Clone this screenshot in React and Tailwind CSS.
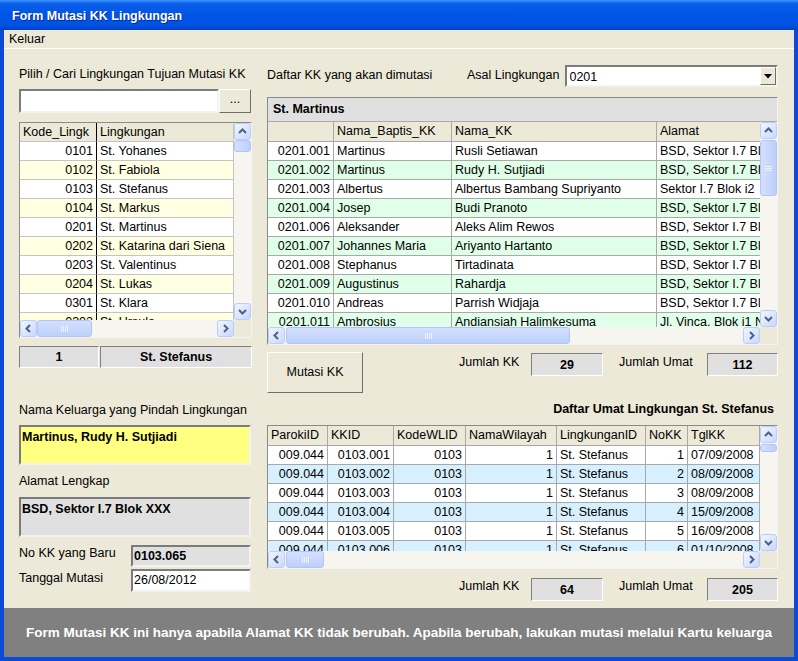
import React from "react";

const leftRows = [
  ["0101", "St. Yohanes"],
  ["0102", "St. Fabiola"],
  ["0103", "St. Stefanus"],
  ["0104", "St. Markus"],
  ["0201", "St. Martinus"],
  ["0202", "St. Katarina dari Siena"],
  ["0203", "St. Valentinus"],
  ["0204", "St. Lukas"],
  ["0301", "St. Klara"],
  ["0302", "St. Ursula"],
];

const kkRows = [
  ["0201.001", "Martinus", "Rusli Setiawan", "BSD, Sektor I.7 Blok XXX"],
  ["0201.002", "Martinus", "Rudy H. Sutjiadi", "BSD, Sektor I.7 Blok XXX"],
  ["0201.003", "Albertus", "Albertus Bambang Supriyanto", "Sektor I.7 Blok i2"],
  ["0201.004", "Josep", "Budi Pranoto", "BSD, Sektor I.7 Blok XXX"],
  ["0201.006", "Aleksander", "Aleks Alim Rewos", "BSD, Sektor I.7 Blok XXX"],
  ["0201.007", "Johannes Maria", "Ariyanto Hartanto", "BSD, Sektor I.7 Blok XXX"],
  ["0201.008", "Stephanus", "Tirtadinata", "BSD, Sektor I.7 Blok XXX"],
  ["0201.009", "Augustinus", "Rahardja", "BSD, Sektor I.7 Blok XXX"],
  ["0201.010", "Andreas", "Parrish Widjaja", "BSD, Sektor I.7 Blok XXX"],
  ["0201.011", "Ambrosius", "Andiansiah Halimkesuma", "Jl. Vinca. Blok i1 No"],
];

const umatRows = [
  ["009.044", "0103.001", "0103", "1", "St. Stefanus", "1", "07/09/2008"],
  ["009.044", "0103.002", "0103", "1", "St. Stefanus", "2", "08/09/2008"],
  ["009.044", "0103.003", "0103", "1", "St. Stefanus", "3", "08/09/2008"],
  ["009.044", "0103.004", "0103", "1", "St. Stefanus", "4", "15/09/2008"],
  ["009.044", "0103.005", "0103", "1", "St. Stefanus", "5", "16/09/2008"],
  ["009.044", "0103.006", "0103", "1", "St. Stefanus", "6", "01/10/2008"],
];

const leftCols = [
  { title: "Kode_Lingk", w: "w-[77px]", align: "text-right", sep: "border-r-black" },
  { title: "Lingkungan", w: "w-[137px]", align: "text-left", sep: "border-r-[#c4c4c4]" },
];

const kkCols = [
  { title: "", w: "w-[66px]", align: "text-right", sep: "border-r-[#a9a9a9]" },
  { title: "Nama_Baptis_KK", w: "w-[118px]", align: "text-left", sep: "border-r-[#a9a9a9]" },
  { title: "Nama_KK", w: "w-[205px]", align: "text-left", sep: "border-r-[#a9a9a9]" },
  { title: "Alamat", w: "w-[160px]", align: "text-left", sep: "border-r-[#a9a9a9]" },
];

const umatCols = [
  { title: "ParokiID", w: "w-[60px]", align: "text-right", sep: "border-r-[#a9a9a9]" },
  { title: "KKID", w: "w-[66px]", align: "text-right", sep: "border-r-[#a9a9a9]" },
  { title: "KodeWLID", w: "w-[72px]", align: "text-right", sep: "border-r-[#a9a9a9]" },
  { title: "NamaWilayah", w: "w-[91px]", align: "text-right", sep: "border-r-[#a9a9a9]" },
  { title: "LingkunganID", w: "w-[89px]", align: "text-left", sep: "border-r-[#a9a9a9]" },
  { title: "NoKK", w: "w-[42px]", align: "text-right", sep: "border-r-[#a9a9a9]" },
  { title: "TglKK", w: "w-[72px]", align: "text-left", sep: "border-r-[#a9a9a9]" },
];

const Arrow = ({ dir }) => {
  const pts = {
    up: "4,9 7.5,5.5 11,9",
    down: "4,6 7.5,9.5 11,6",
    left: "9,4 5.5,7.5 9,11",
    right: "6,4 9.5,7.5 6,11",
  }[dir];
  return (
    <svg width="15" height="15" viewBox="0 0 15 15">
      <polyline points={pts} fill="none" stroke="#4d6185" strokeWidth="2" />
    </svg>
  );
};

const ScrollBtn = ({ dir }) => (
  <div className="flex h-[17px] w-[17px] shrink-0 items-center justify-center rounded-[3px] border border-[#bccdf9] bg-[linear-gradient(135deg,#f2f6ff_0%,#c8d7fc_100%)]">
    <Arrow dir={dir} />
  </div>
);

const VScroll = ({ gap, size, grip }) => (
  <div className="flex w-[17px] shrink-0 flex-col bg-[#f6f5f0]">
    <ScrollBtn dir="up" />
    <div className="flex min-h-0 flex-1 flex-col">
      <div className={gap} />
      <div className={"flex shrink-0 flex-col items-center justify-center gap-[1px] rounded-[3px] border border-[#b2c5f6] bg-[linear-gradient(90deg,#d4e0fe,#bdcffa)] " + size}>
        {grip && (
          <>
            <div className="h-px w-[7px] bg-[#eef3ff]" />
            <div className="h-px w-[7px] bg-[#eef3ff]" />
            <div className="h-px w-[7px] bg-[#eef3ff]" />
          </>
        )}
      </div>
    </div>
    <ScrollBtn dir="down" />
  </div>
);

const HScroll = ({ gap, size }) => (
  <div className="flex h-[17px] min-w-0 flex-1 bg-[#f6f5f0]">
    <ScrollBtn dir="left" />
    <div className="flex min-w-0 flex-1">
      <div className={gap} />
      <div className={"flex shrink-0 items-center justify-center gap-[1px] rounded-[3px] border border-[#b2c5f6] bg-[linear-gradient(180deg,#d4e0fe,#bdcffa)] " + size}>
        <div className="h-[6px] w-px bg-[#eef3ff]" />
        <div className="h-[6px] w-px bg-[#eef3ff]" />
        <div className="h-[6px] w-px bg-[#eef3ff]" />
        <div className="h-[6px] w-px bg-[#eef3ff]" />
      </div>
    </div>
    <ScrollBtn dir="right" />
  </div>
);

function Grid({ caption, cols, rows, bgs, line, header, v, h, className }) {
  return (
    <div className={"flex flex-col border border-t-[#8a8a8a] border-l-[#8a8a8a] border-b-[#f4f4f4] border-r-[#f4f4f4] bg-white " + className}>
      {caption}
      <div className="flex min-h-0 flex-1">
        <div className="flex min-w-0 flex-1 flex-col overflow-hidden">
          <div className="flex shrink-0">
            {cols.map((c, i) => (
              <div key={i} className={`${c.w} ${header} ${c.sep} shrink-0 overflow-hidden whitespace-nowrap border-r border-b bg-[#ece9d8] px-[3px]`}>
                {c.title}
              </div>
            ))}
          </div>
          <div className="min-h-0 flex-1 overflow-hidden">
            {rows.map((r, ri) => (
              <div key={ri} className={`flex h-[19px] ${bgs[ri % 2]}`}>
                {r.map((val, ci) => (
                  <div key={ci} className={`${cols[ci].w} ${cols[ci].align} ${cols[ci].sep} ${line} shrink-0 overflow-hidden whitespace-nowrap border-r border-b px-[3px] leading-[18px]`}>
                    {val}
                  </div>
                ))}
              </div>
            ))}
          </div>
        </div>
        <VScroll {...v} />
      </div>
      <div className="flex shrink-0">
        <HScroll {...h} />
        <div className="w-[17px] shrink-0 bg-[#ece9d8]" />
      </div>
    </div>
  );
}

const sunken = "border border-t-[#808080] border-l-[#808080] border-b-white border-r-white";
const sunken2 = "border-2 border-t-[#7b7b7b] border-l-[#7b7b7b] border-b-[#f2f2f2] border-r-[#f2f2f2]";
const raised = "border border-t-white border-l-white border-b-[#716f64] border-r-[#716f64]";

const CountBox = ({ value, className }) => (
  <div className={`${sunken} h-[23px] bg-[#e0e0e0] text-center font-bold leading-[22px] ${className}`}>{value}</div>
);

export default function App() {
  return (
    <div className="flex h-[661px] w-[798px] flex-col bg-[#ece9d8] font-['Liberation_Sans',Arial,sans-serif] text-[12.5px] text-black">
      {/* title bar */}
      <div className="flex h-[30px] shrink-0 items-center bg-[linear-gradient(180deg,#3d95ff_0%,#0a5ee9_12%,#0055e5_50%,#0152e3_85%,#003fc0_100%)] pl-[12px] pt-[2px] text-[12.5px] font-bold text-white [text-shadow:1px_1px_0_#0a2a90]">
        Form Mutasi KK Lingkungan
      </div>

      <div className="flex min-h-0 flex-1 flex-col border-x-[4px] border-b-[4px] border-x-[#0c4ad8] border-b-[#0c4ad8]">
        {/* menu */}
        <div className="flex h-[19px] shrink-0 items-center border-b border-b-white pl-[5px] leading-[18px]">Keluar</div>

        {/* content */}
        <div className="flex min-h-0 flex-1 gap-[15px] pl-[15px] pr-[16px]">
          {/* left column */}
          <div className="flex w-[233px] shrink-0 flex-col">
            <div className="mt-[17px] leading-[16px]">Pilih / Cari Lingkungan Tujuan Mutasi KK</div>
            <div className="mt-[7px] flex h-[24px]">
              <div className={`${sunken2} w-[200px] bg-white`} />
              <div className={`${raised} flex w-[32px] items-center justify-center bg-[#ece9d8] pb-[4px]`}>...</div>
            </div>
            <Grid
              className="mt-[9px] h-[216px]"
              cols={leftCols}
              rows={leftRows}
              bgs={["bg-white", "bg-[#ffffe1]"]}
              line="border-b-[#c4c4c4]"
              header="h-[19px] leading-[18px] border-b-[#c4c4c4]"
              v={{ gap: "h-0", size: "h-[12px]", grip: false }}
              h={{ gap: "w-0", size: "w-[55px]" }}
            />
            <div className="mt-[8px] flex h-[22px] gap-[1px]">
              <div className={`${sunken} w-[80px] bg-[#e0e0e0] text-center font-bold leading-[20px]`}>1</div>
              <div className={`${sunken} flex-1 bg-[#e0e0e0] text-center font-bold leading-[20px]`}>St. Stefanus</div>
            </div>
            <div className="mt-[34px] leading-[16px]">Nama Keluarga yang Pindah Lingkungan</div>
            <div className={`${sunken2} mt-[7px] h-[40px] w-[232px] bg-[#ffff80] pl-[1px] pt-[2px] font-bold leading-[16px]`}>
              Martinus, Rudy H. Sutjiadi
            </div>
            <div className="mt-[8px] leading-[16px]">Alamat Lengkap</div>
            <div className={`${sunken2} mt-[8px] h-[40px] w-[232px] bg-[#e0e0e0] pl-[1px] pt-[2px] font-bold leading-[16px]`}>
              BSD, Sektor I.7 Blok XXX
            </div>
            <div className="mt-[8px] flex h-[22px] items-start">
              <div className="w-[112px] leading-[16px]">No KK yang Baru</div>
              <div className={`${sunken2} h-[22px] w-[120px] bg-[#e0e0e0] pl-px font-bold leading-[18px]`}>0103.065</div>
            </div>
            <div className="mt-[2px] flex h-[23px] items-start">
              <div className="w-[112px] pt-px leading-[16px]">Tanggal Mutasi</div>
              <div className={`${sunken2} h-[23px] w-[120px] bg-white pl-px leading-[19px]`}>26/08/2012</div>
            </div>
          </div>

          {/* right column */}
          <div className="flex w-[511px] shrink-0 flex-col">
            <div className="mt-[16px] flex h-[22px] items-center">
              <div className="w-[200px] pb-[3px] leading-[16px]">Daftar KK yang akan dimutasi</div>
              <div className="pb-[3px] leading-[16px]">Asal Lingkungan</div>
              <div className={`${sunken2} ml-[6px] flex h-[22px] flex-1 items-center bg-white`}>
                <div className="flex-1 pl-[2px] pt-[2px] leading-[16px]">0201</div>
                <div className={`${raised} flex h-[18px] w-[16px] items-center justify-center bg-[#ece9d8]`}>
                  <svg width="8" height="5" viewBox="0 0 8 5">
                    <polygon points="0,0 8,0 4,4.5" fill="#000" />
                  </svg>
                </div>
              </div>
            </div>
            <Grid
              className="mt-[10px] h-[248px]"
              caption={
                <div className="h-[24px] shrink-0 border-b border-b-[#a9a9a9] bg-[#e0e0e0] pl-[5px] font-bold leading-[23px]">St. Martinus</div>
              }
              cols={kkCols}
              rows={kkRows}
              bgs={["bg-white", "bg-[#e0ffe8]"]}
              line="border-b-[#a9a9a9]"
              header="h-[20px] leading-[19px] border-b-[#a9a9a9]"
              v={{ gap: "h-px", size: "h-[56px]", grip: true }}
              h={{ gap: "w-px", size: "w-[284px]" }}
            />
            <div className="mt-[7px] flex h-[41px] items-start">
              <div className={`${raised} flex h-[41px] w-[96px] items-center justify-center bg-[#ece9d8]`}>Mutasi KK</div>
              <div className="ml-auto flex items-start pt-px">
                <div className="w-[72px] leading-[18px]">Jumlah KK</div>
                <CountBox value="29" className="w-[72px]" />
                <div className="ml-[16px] w-[88px] leading-[18px]">Jumlah Umat</div>
                <CountBox value="112" className="w-[71px]" />
              </div>
            </div>
            <div className="mt-[8px] pr-[4px] text-right font-bold leading-[16px]">Daftar Umat Lingkungan St. Stefanus</div>
            <Grid
              className="mt-[8px] h-[144px]"
              cols={umatCols}
              rows={umatRows}
              bgs={["bg-white", "bg-[#d7f0ff]"]}
              line="border-b-[#a9a9a9]"
              header="h-[20px] leading-[19px] border-b-[#a9a9a9]"
              v={{ gap: "h-px", size: "h-[8px]", grip: false }}
              h={{ gap: "w-px", size: "w-[38px]" }}
            />
            <div className="mt-[9px] flex items-start justify-end">
              <div className="w-[72px] leading-[16px]">Jumlah KK</div>
              <CountBox value="64" className="w-[72px]" />
              <div className="ml-[16px] w-[88px] leading-[16px]">Jumlah Umat</div>
              <CountBox value="205" className="w-[71px]" />
            </div>
          </div>
        </div>

        {/* status */}
        <div className="flex h-[49px] shrink-0 items-center justify-center bg-[#808080] pt-px text-[13.5px] font-bold text-white">
          Form Mutasi KK ini hanya apabila Alamat KK tidak berubah. Apabila berubah, lakukan mutasi melalui Kartu keluarga
        </div>
      </div>
    </div>
  );
}
